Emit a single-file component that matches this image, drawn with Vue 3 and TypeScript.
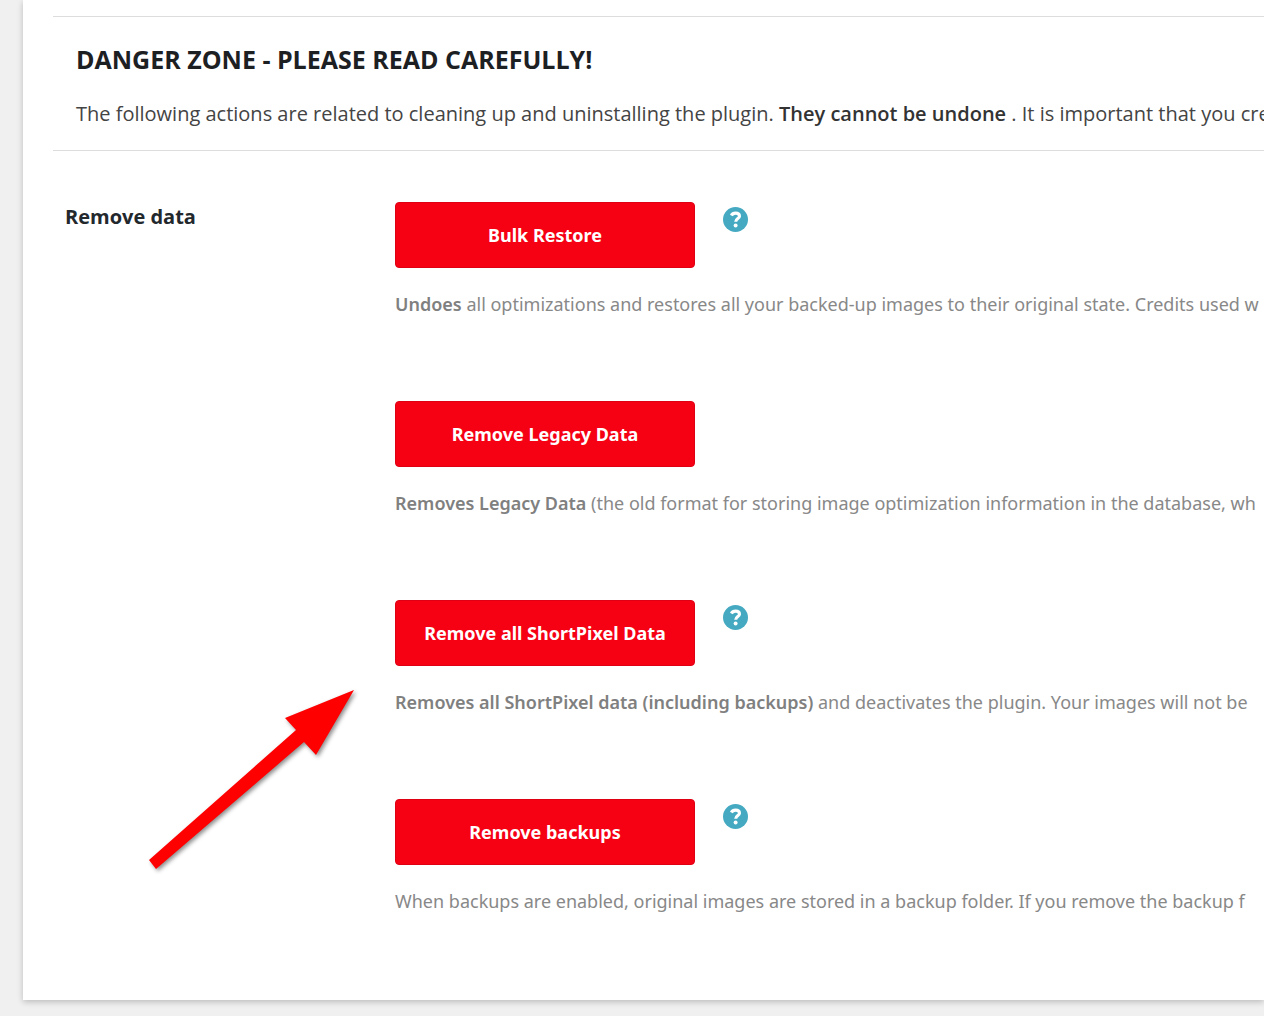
<script setup lang="ts">
interface Action {
  id: string
  label: string
  lead: string
  text: string
  help: boolean
}

const actions: Action[] = [
  {
    id: 'bulk-restore',
    label: 'Bulk Restore',
    lead: 'Undoes',
    text: ' all optimizations and restores all your backed-up images to their original state. Credits used w',
    help: true,
  },
  {
    id: 'remove-legacy',
    label: 'Remove Legacy Data',
    lead: 'Removes Legacy Data',
    text: ' (the old format for storing image optimization information in the database, wh',
    help: false,
  },
  {
    id: 'remove-all',
    label: 'Remove all ShortPixel Data',
    lead: 'Removes all ShortPixel data (including backups)',
    text: ' and deactivates the plugin. Your images will not be',
    help: true,
  },
  {
    id: 'remove-backups',
    label: 'Remove backups',
    lead: '',
    text: 'When backups are enabled, original images are stored in a backup folder. If you remove the backup f',
    help: true,
  },
]
</script>

<template>
  <main class="panel">
    <header class="danger">
      <h2>DANGER ZONE - PLEASE READ CAREFULLY!</h2>
      <p>
        The following actions are related to cleaning up and uninstalling the plugin.
        <strong>They cannot be undone</strong> . It is important that you cre
      </p>
    </header>

    <section class="settings" aria-labelledby="remove-data">
      <h3 id="remove-data">Remove data</h3>
      <div class="actions">
        <div v-for="action in actions" :key="action.id" class="action">
          <div class="controls">
            <button type="button" class="remove" :aria-describedby="action.id">{{ action.label }}</button>
            <a v-if="action.help" href="#" class="help" :aria-label="'Help: ' + action.label">
              <svg viewBox="0 0 24 24" aria-hidden="true">
                <circle cx="12" cy="12" r="12" fill="#45aac1" />
                <path d="M8 8.2C8.8 6.7 10.2 5.9 12 5.9C14.3 5.9 15.8 7 15.8 8.8C15.8 11 12.2 11.2 12.2 14.2" fill="none" stroke="#fff" stroke-width="3" />
                <circle cx="12.1" cy="17.8" r="1.9" fill="#fff" />
              </svg>
            </a>
          </div>
          <p :id="action.id"><strong v-if="action.lead">{{ action.lead }}</strong>{{ action.text }}</p>
        </div>
      </div>
    </section>

    <svg class="arrow" viewBox="0 0 220 190" aria-hidden="true">
      <path d="M214 10L145 38L156 50L9 180L16 189L164 62L176 75Z" fill="#f00" />
    </svg>
  </main>
</template>

<style>
body {
  margin: 0;
  background: #f0f0f0;
}
</style>

<style scoped>
.panel {
  position: relative;
  box-sizing: border-box;
  margin: 0 0 16px 23px;
  padding: 16px 0 83px 30px;
  overflow: hidden;
  background: #fff;
  box-shadow: 0 2px 6px rgba(0, 0, 0, 0.22);
  font-family: "Segoe UI", "Open Sans", "Noto Sans", sans-serif;
}

.danger {
  padding: 23px 0 18px 23px;
  border-top: 1px solid #ddd;
  border-bottom: 1px solid #ddd;
}

h2,
h3,
p {
  margin: 0;
  white-space: nowrap;
}

h2 {
  color: #1d2023;
  font-size: 25px;
  font-weight: 700;
  line-height: 38px;
}

.danger p {
  margin-top: 18px;
  color: #444;
  font-size: 20px;
  line-height: 36px;
}

.danger strong {
  color: #333;
  font-weight: 600;
}

.settings {
  display: grid;
  grid-template-columns: 330px minmax(0, 1fr);
  padding: 51px 0 0 12px;
}

h3 {
  color: #23282d;
  font-size: 20px;
  font-weight: 700;
  line-height: 30px;
}

.actions {
  display: flex;
  flex-direction: column;
  gap: 81px;
  font-family: "Segoe UI", "Noto Sans", "Open Sans", sans-serif;
}

.controls {
  display: flex;
  align-items: flex-start;
  gap: 28px;
}

.remove {
  width: 300px;
  height: 66px;
  padding: 0;
  border: 1px solid #e00014;
  border-radius: 4px;
  background: #f60014;
  color: #fff;
  font-family: inherit;
  font-size: 18px;
  font-weight: 700;
  cursor: pointer;
}

.help {
  display: block;
  margin-top: 5px;
}

.help svg {
  display: block;
  width: 25px;
  height: 25px;
}

.action p {
  margin-top: 20px;
  color: #888;
  font-size: 18px;
  line-height: 32px;
}

.action strong {
  color: #808080;
  font-weight: 600;
}

.arrow {
  position: absolute;
  top: 680px;
  left: 117px;
  width: 220px;
  height: 190px;
  overflow: visible;
  filter: drop-shadow(2px 2px 2px rgba(0, 0, 0, 0.45));
  pointer-events: none;
}
</style>
